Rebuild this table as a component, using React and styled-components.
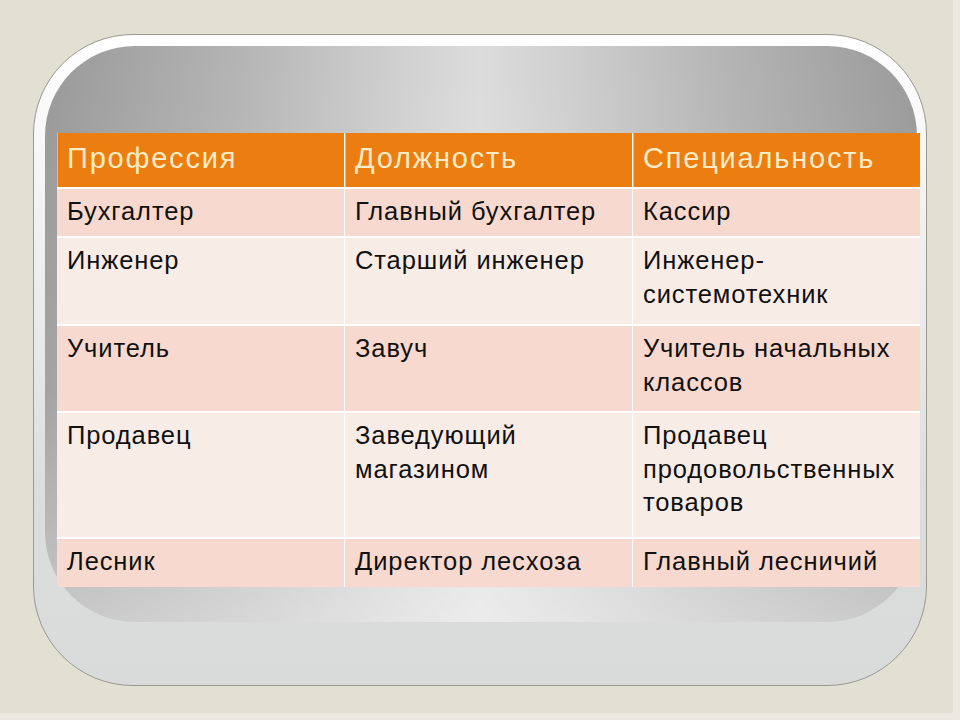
import React from 'react';
import styled, { createGlobalStyle } from 'styled-components';

const GlobalStyle = createGlobalStyle`
  html, body {
    margin: 0;
    padding: 0;
    background: #ebe9e1;
  }
  body {
    font-family: "Liberation Sans", Arial, sans-serif;
  }
`;

const header = ['Профессия', 'Должность', 'Специальность'];

const rows = [
  { height: 47, cells: ['Бухгалтер', 'Главный бухгалтер', 'Кассир'] },
  { height: 86, cells: ['Инженер', 'Старший инженер', ['Инженер-', 'системотехник']] },
  { height: 85, cells: ['Учитель', 'Завуч', ['Учитель начальных', 'классов']] },
  { height: 124, cells: ['Продавец', ['Заведующий', 'магазином'], ['Продавец', 'продовольственных', 'товаров']] },
  { height: 48, cells: ['Лесник', 'Директор лесхоза', 'Главный лесничий'] },
];

const App = () => {
  const template = [54, ...rows.map(r => r.height)].map(h => h + 'px').join(' ');
  return (
    <>
      <GlobalStyle />
      <Page>
        <Frame>
          <Panel>
            <Table style={{ gridTemplateRows: template }}>
              {header.map(h => <HeadCell key={h}>{h}</HeadCell>)}
              {rows.map((row, idx) =>
                row.cells.map((cell, ci) => (
                  <Cell key={idx + '-' + ci} $odd={idx % 2 === 0}>
                    {Array.isArray(cell) ? cell.map(line => <Line key={line}>{line}</Line>) : cell}
                  </Cell>
                ))
              )}
            </Table>
          </Panel>
        </Frame>
      </Page>
    </>
  );
};

const Page = styled.div`
  width: 953px;
  height: 713px;
  background: #e2dfd3;
  padding: 34px 0 0 33px;
  box-sizing: border-box;
`;

const Frame = styled.div`
  width: 894px;
  height: 652px;
  box-sizing: border-box;
  border: 1px solid #9b9890;
  border-radius: 100px;
  background: linear-gradient(180deg, #ffffff 0%, #f1f1f1 30%, #dcdede 70%, #d9dbdb 100%);
  padding: 11px 9px 0 11px;
`;

const Panel = styled.div`
  height: 576px;
  border-radius: 90px;
  background:
    linear-gradient(180deg, rgba(255,255,255,0) 0%, rgba(255,255,255,0.1) 60%, rgba(255,255,255,0.45) 100%),
    linear-gradient(90deg, #999999 0%, #b4b4b4 22%, #d2d2d2 42%, #dcdcdc 50%, #cfcfcf 60%, #b2b2b2 80%, #9a9a9a 100%);
  padding: 87px 0 0 12px;
  box-sizing: border-box;
`;

const Table = styled.div`
  width: 863px;
  display: grid;
  grid-template-columns: 287px 287px 287px;
  column-gap: 1px;
  row-gap: 2px;
  background: #ffffff;
`;

const HeadCell = styled.div`
  background: #ec7d10;
  color: #fdecc6;
  font-size: 29px;
  letter-spacing: 1.8px;
  line-height: 33px;
  padding: 9px 0 0 10px;
  box-shadow: inset 1px 0 0 rgba(255, 236, 190, 0.5);
`;

const Cell = styled.div`
  background: ${p => (p.$odd ? '#f7d9cf' : '#f8ece7')};
  color: #111111;
  font-size: 25.5px;
  letter-spacing: 0.9px;
  line-height: 33.5px;
  padding: 6px 0 0 10px;
`;

const Line = styled.div``;

export default App;
